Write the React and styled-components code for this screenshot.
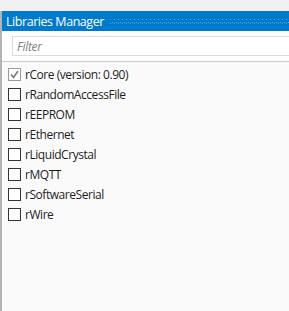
import React from "react";
import styled, { createGlobalStyle } from "styled-components";

const Global = createGlobalStyle`
  html, body { margin: 0; padding: 0; background: #f0f0f0; }
  body { font-family: "Open Sans", "Noto Sans", sans-serif; }
`;

const Page = styled.div`
  width: 289px;
  height: 311px;
  padding-top: 11px;
  box-sizing: border-box;
  display: flex;
  flex-direction: column;
  overflow: hidden;
`;

const Panel = styled.div`
  flex: 1;
  display: flex;
  flex-direction: column;
  border-left: 2px solid #b4b4b4;
  box-sizing: border-box;
  background: #fafafa;
`;

const TitleBar = styled.div`
  height: 20px;
  background: #007acc;
  display: flex;
  align-items: center;
  padding-left: 4px;
  gap: 6px;
`;

const Title = styled.span`
  color: #fff;
  font-size: 12.5px;
  white-space: nowrap;
  letter-spacing: -0.45px;
`;

const GripSvg = styled.svg`
  flex: 1;
  height: 5px;
  margin-top: 1px;
  display: block;
`;

const Grip = () => (
  <GripSvg>
    <defs>
      <pattern id="grip" width="4" height="4" patternUnits="userSpaceOnUse">
        <rect x="0" y="0" width="1" height="1" fill="#5ba7e4" />
        <rect x="2" y="3" width="1" height="1" fill="#5ba7e4" />
      </pattern>
    </defs>
    <rect x="0" y="0" width="100%" height="5" fill="url(#grip)" />
  </GripSvg>
);

const FilterArea = styled.div`
  background: #fff;
  padding: 5px 0 5px 10px;
  border-bottom: 1px solid #c8c8c8;
`;

const FilterInput = styled.div`
  height: 20px;
  border: 1px solid #dcdcdc;
  border-right: none;
  box-sizing: border-box;
  display: flex;
  align-items: center;
  padding-left: 4px;
  font-style: italic;
  color: #808080;
  font-size: 12px;
  letter-spacing: -0.3px;
`;

const List = styled.div`
  display: flex;
  flex-direction: column;
  padding: 2px 0 0 6px;
`;

const Row = styled.div`
  height: 20px;
  display: flex;
  align-items: center;
  gap: 4px;
`;

const Box = styled.span`
  width: 13px;
  height: 13px;
  box-sizing: border-box;
  border: 1px solid ${p => (p.$checked ? "#9a9a9a" : "#333")};
  background: #fff;
  display: inline-flex;
  align-items: center;
  justify-content: center;
`;

const Label = styled.span`
  font-size: 12px;
  color: #1e1e1e;
  white-space: nowrap;
  letter-spacing: -0.45px;
`;

const items = [
  { name: "rCore (version: 0.90)", checked: true },
  { name: "rRandomAccessFile" },
  { name: "rEEPROM" },
  { name: "rEthernet" },
  { name: "rLiquidCrystal" },
  { name: "rMQTT" },
  { name: "rSoftwareSerial" },
  { name: "rWire" },
];

export default function App() {
  return (
    <Page>
      <Global />
      <Panel>
        <TitleBar>
          <Title>Libraries Manager</Title>
          <Grip />
        </TitleBar>
        <FilterArea>
          <FilterInput>Filter</FilterInput>
        </FilterArea>
        <List>
          {items.map(it => (
            <Row key={it.name}>
              <Box $checked={it.checked}>
                {it.checked && (
                  <svg width="9" height="9" viewBox="0 0 9 9">
                    <path d="M1 4.5 L3.5 7.5 L8 1" fill="none" stroke="#7a7a7a" strokeWidth="1.6" />
                  </svg>
                )}
              </Box>
              <Label>{it.name}</Label>
            </Row>
          ))}
        </List>
      </Panel>
    </Page>
  );
}
